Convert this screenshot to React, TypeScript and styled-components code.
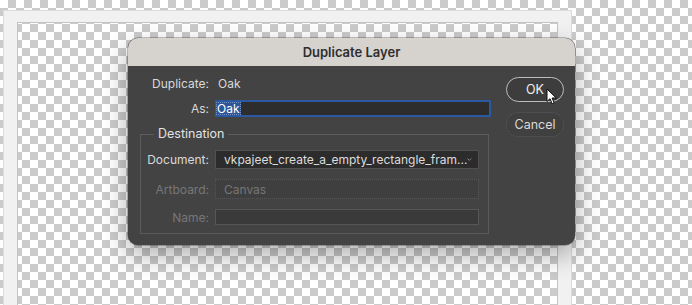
import React from "react";
import styled, { createGlobalStyle } from "styled-components";

const GlobalStyle = createGlobalStyle`
  html, body {
    margin: 0;
    padding: 0;
    overflow: hidden;
  }
  body {
    font-family: "Inter", "Liberation Sans", sans-serif;
  }
`;

const checker = `
  background-color: #ffffff;
  background-image: conic-gradient(#cbcbcb 25%, #ffffff 0 50%, #cbcbcb 0 75%, #ffffff 0);
  background-size: 16px 16px;
`;

const Stage = styled.div`
  position: relative;
  width: 692px;
  height: 305px;
  overflow: hidden;
  ${checker}
`;

const Frame = styled.div`
  margin: 11px 0 0 4px;
  width: 541px;
  height: 300px;
  border-style: solid;
  border-color: #f1f1f1;
  border-width: 11px 13px 0 13px;
  box-shadow: 0 0 0 1px #dcdcdc, inset 0 0 0 1px #c4c4c4;
  ${checker}
  background-position: 5px 2px;
`;

const Dialog = styled.div`
  position: absolute;
  left: 128px;
  top: 38px;
  width: 447px;
  height: 207px;
  border-radius: 10px;
  overflow: hidden;
  background: #434343;
  box-shadow: 0 10px 26px rgba(0, 0, 0, 0.32), 0 0 0 0.5px rgba(0, 0, 0, 0.45);
  display: flex;
  flex-direction: column;
`;

const TitleBar = styled.div`
  height: 28px;
  background: #d6d2ce;
  display: flex;
  align-items: center;
  justify-content: center;
  font-size: 13px;
  font-weight: 600;
  color: #2e2e2e;
`;

const Body = styled.div`
  flex: 1;
  display: flex;
  padding: 8px 11px 11px 12px;
  gap: 15px;
`;

const FormColumn = styled.div`
  width: 351px;
  display: flex;
  flex-direction: column;
`;

const Row = styled.div<{ $top?: number; $h: number }>`
  display: grid;
  grid-template-columns: 69px 276px;
  column-gap: 6px;
  align-items: center;
  height: ${(p) => p.$h}px;
  margin-top: ${(p) => p.$top || 0}px;
`;

const Label = styled.span<{ $dim?: boolean }>`
  text-align: right;
  font-size: 12px;
  color: ${(p) => (p.$dim ? "#777777" : "#d9d9d9")};
  white-space: nowrap;
`;

const Value = styled.span`
  font-size: 12px;
  color: #d9d9d9;
  padding-left: 3px;
`;

const NameInput = styled.div`
  height: 17px;
  box-sizing: border-box;
  background: #2d2d2d;
  border: 2px solid #2a58a3;
  border-left-width: 1px;
  display: flex;
  align-items: center;
`;

const Selection = styled.span`
  background: #2d5698;
  color: #ffffff;
  font-size: 12px;
  line-height: 13px;
  padding: 0 1px;
  outline: 1px dotted rgba(255, 255, 255, 0.35);
  outline-offset: -1px;
`;

const Group = styled.fieldset`
  margin: 9px 0 0 0;
  padding: 0 0 8px 0;
  width: 349px;
  box-sizing: border-box;
  min-width: 0;
  border: 1px solid #5a5a5a;
  border-top-color: #5e5e5e;
`;

const Legend = styled.legend`
  margin-left: 13px;
  padding: 0 4px;
  height: 16px;
  line-height: 16px;
  font-size: 12.5px;
  color: #e2e2e2;
`;

const GroupRow = styled.div<{ $top: number; $h: number }>`
  display: grid;
  grid-template-columns: 68px 264px;
  column-gap: 6px;
  align-items: center;
  height: ${(p) => p.$h}px;
  margin-top: ${(p) => p.$top}px;
`;

const Field = styled.div<{ $kind: "select" | "disabled" | "empty" }>`
  height: 100%;
  box-sizing: border-box;
  display: flex;
  align-items: center;
  justify-content: space-between;
  padding: 0 6px 0 8px;
  font-size: 12px;
  background: ${(p) =>
    p.$kind === "select" ? "#2c2c2c" : p.$kind === "disabled" ? "#3f3f3f" : "#3a3a3a"};
  border: 1px ${(p) => (p.$kind === "disabled" ? "dotted" : "solid")}
    ${(p) => (p.$kind === "select" ? "#505050" : "#565656")};
  color: ${(p) => (p.$kind === "select" ? "#dcdcdc" : "#767676")};
  white-space: nowrap;
  overflow: hidden;
`;

const ButtonColumn = styled.div`
  width: 58px;
  display: flex;
  flex-direction: column;
  padding-top: 3px;
  gap: 10px;
`;

const Button = styled.div<{ $primary?: boolean }>`
  position: relative;
  height: 25px;
  box-sizing: border-box;
  border-radius: 13px;
  display: flex;
  align-items: center;
  justify-content: center;
  font-size: 12.5px;
  color: ${(p) => (p.$primary ? "#f0f0f0" : "#dadada")};
  border: ${(p) => (p.$primary ? "1.5px solid #bdbdbd" : "1px dotted #5c5c5c")};
  background: ${(p) => (p.$primary ? "#3d3d3d" : "#404040")};
`;

const Pointer = styled.svg`
  position: absolute;
  left: 39px;
  top: 10px;
`;

const Chevron = () => (
  <svg width="8" height="5" viewBox="0 0 8 5">
    <path d="M0.8 0.8 L4 4 L7.2 0.8" fill="none" stroke="#bdbdbd" strokeWidth="1.1" />
  </svg>
);

export default function App() {
  return (
    <>
      <GlobalStyle />
      <Stage>
        <Frame />
        <Dialog>
          <TitleBar>Duplicate Layer</TitleBar>
          <Body>
            <FormColumn>
              <Row $h={18}>
                <Label>Duplicate:</Label>
                <Value>Oak</Value>
              </Row>
              <Row $h={17} $top={8}>
                <Label>As:</Label>
                <NameInput>
                  <Selection>Oak</Selection>
                </NameInput>
              </Row>
              <Group>
                <Legend>Destination</Legend>
                <GroupRow $h={19} $top={8}>
                  <Label>Document:</Label>
                  <Field $kind="select">
                    <span>vkpajeet_create_a_empty_rectangle_fram...</span>
                    <Chevron />
                  </Field>
                </GroupRow>
                <GroupRow $h={20} $top={10}>
                  <Label $dim>Artboard:</Label>
                  <Field $kind="disabled">
                    <span>Canvas</span>
                  </Field>
                </GroupRow>
                <GroupRow $h={16} $top={10}>
                  <Label $dim>Name:</Label>
                  <Field $kind="empty" />
                </GroupRow>
              </Group>
            </FormColumn>
            <ButtonColumn>
              <Button $primary>
                OK
                <Pointer width="12" height="17" viewBox="0 0 12 17">
                  <path
                    d="M1 1 L1 13.5 L4 10.7 L6.2 15.8 L8.2 15 L6.1 10 L10.2 10 Z"
                    fill="#ffffff"
                    stroke="#111111"
                    strokeWidth="1"
                    strokeLinejoin="round"
                  />
                </Pointer>
              </Button>
              <Button>Cancel</Button>
            </ButtonColumn>
          </Body>
        </Dialog>
      </Stage>
    </>
  );
}
